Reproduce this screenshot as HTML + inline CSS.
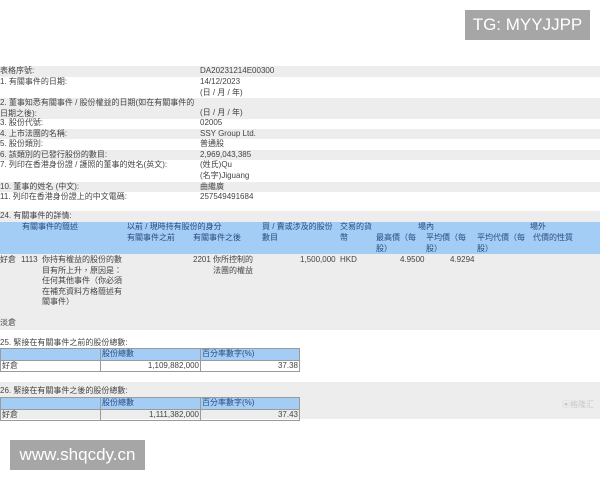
<!DOCTYPE html>
<html><head><meta charset="utf-8"><style>
*{margin:0;padding:0;box-sizing:border-box}
body{width:600px;height:480px;background:#fff;position:relative;overflow:hidden;font-family:"Liberation Sans","Noto Sans CJK TC",sans-serif;font-size:8px;color:#444}
.a{position:absolute;white-space:nowrap;line-height:10.5px}
.bg{position:absolute;left:0;width:600px}
.g{background:#ededed}
.blue{background:#a3cdf5}
.tb{position:absolute;border-collapse:collapse;left:0;width:300px}
.tb td{border:1px solid #9a9a9a;height:11.5px;padding:0 1px;line-height:10px;font-size:8px}
.tb tr.h td{background:#a3cdf5;color:#2a4a80}
.r{text-align:right}
.box{position:absolute;background:#a6a6a6;color:#fff;font-family:"Liberation Sans",sans-serif}
</style></head><body>
<div class="box" style="left:465px;top:10px;width:125px;height:30px;font-size:17px;line-height:30px;text-align:center">TG: MYYJJPP</div>

<div class="bg g" style="top:66px;height:11px"></div>
<div class="bg g" style="top:98px;height:21px"></div>
<div class="bg g" style="top:129px;height:10px"></div>
<div class="bg g" style="top:150px;height:10px"></div>
<div class="bg g" style="top:182px;height:10px"></div>

<div class="a" style="left:0;top:66px">表格序號:</div><div class="a" style="left:200px;top:66px">DA20231214E00300</div>
<div class="a" style="left:0;top:77px">1. 有關事件的日期:</div><div class="a" style="left:200px;top:77px">14/12/2023<br>(日 / 月 / 年)</div>
<div class="a" style="left:0;top:98px">2. 董事知悉有關事件 / 股份權益的日期(如在有關事件的<br>日期之後):</div><div class="a" style="left:200px;top:108px">(日 / 月 / 年)</div>
<div class="a" style="left:0;top:118px">3. 股份代號:</div><div class="a" style="left:200px;top:118px">02005</div>
<div class="a" style="left:0;top:129px">4. 上市法團的名稱:</div><div class="a" style="left:200px;top:129px">SSY Group Ltd.</div>
<div class="a" style="left:0;top:139px">5. 股份類別:</div><div class="a" style="left:200px;top:139px">普通股</div>
<div class="a" style="left:0;top:150px">6. 該類別的已發行股份的數目:</div><div class="a" style="left:200px;top:150px">2,969,043,385</div>
<div class="a" style="left:0;top:160px">7. 列印在香港身份證 / 護照的董事的姓名(英文):</div><div class="a" style="left:200px;top:160px">(姓氏)Qu<br>(名字)Jiguang</div>
<div class="a" style="left:0;top:182px">10. 董事的姓名 (中文):</div><div class="a" style="left:200px;top:182px">曲繼廣</div>
<div class="a" style="left:0;top:192px">11. 列印在香港身份證上的中文電碼:</div><div class="a" style="left:200px;top:192px">257549491684</div>

<div class="bg g" style="top:211px;height:11px"></div>
<div class="a" style="left:0;top:211px">24. 有關事件的詳情:</div>
<div class="bg blue" style="top:222px;height:32px"></div>
<div class="bg g" style="top:254px;height:76px"></div>
<div class="a" style="left:22px;top:222px;color:#2a4a80">有關事件的簡述</div>
<div class="a" style="left:127px;top:222px;color:#2a4a80">以前 / 現時持有股份的身分</div>
<div class="a" style="left:127px;top:233px;color:#2a4a80">有關事件之前</div>
<div class="a" style="left:193px;top:233px;color:#2a4a80">有關事件之後</div>
<div class="a" style="left:262px;top:222px;color:#2a4a80">買 / 賣或涉及的股份<br>數目</div>
<div class="a" style="left:340px;top:222px;color:#2a4a80">交易的貨<br>幣</div>
<div class="a" style="left:418px;top:222px;color:#2a4a80">場內</div>
<div class="a" style="left:376px;top:233px;color:#2a4a80">最高價（每<br>股）</div>
<div class="a" style="left:426px;top:233px;color:#2a4a80">平均價（每<br>股）</div>
<div class="a" style="left:477px;top:233px;color:#2a4a80">平均代價（每<br>股）</div>
<div class="a" style="left:530px;top:222px;color:#2a4a80">場外</div>
<div class="a" style="left:533px;top:233px;color:#2a4a80">代價的性質</div>

<div class="a" style="left:0;top:255px">好倉</div>
<div class="a" style="left:21px;top:255px">1113</div>
<div class="a" style="left:42px;top:255px;line-height:10.6px">你持有權益的股份的數<br>目有所上升，原因是：<br>任何其他事件（你必須<br>在補充資料方格簡述有<br>關事件）</div>
<div class="a" style="left:193px;top:255px">2201</div>
<div class="a" style="left:213px;top:255px">你所控制的<br>法團的權益</div>
<div class="a" style="left:300px;top:255px">1,500,000</div>
<div class="a" style="left:340px;top:255px">HKD</div>
<div class="a" style="left:400px;top:255px">4.9500</div>
<div class="a" style="left:450px;top:255px">4.9294</div>
<div class="a" style="left:0;top:318px">淡倉</div>

<div class="a" style="left:0;top:338px">25. 緊接在有關事件之前的股份總數:</div>
<table class="tb" style="top:348px">
<tr class="h"><td style="width:100px"></td><td style="width:100px">股份總數</td><td>百分率數字(%)</td></tr>
<tr><td>好倉</td><td class="r">1,109,882,000</td><td class="r">37.38</td></tr>
</table>

<div class="bg g" style="top:382px;height:37px"></div>
<div class="a" style="left:0;top:386px">26. 緊接在有關事件之後的股份總數:</div>
<table class="tb" style="top:397px">
<tr class="h"><td style="width:100px"></td><td style="width:100px">股份總數</td><td>百分率數字(%)</td></tr>
<tr><td>好倉</td><td class="r">1,111,382,000</td><td class="r">37.43</td></tr>
</table>
<div class="a" style="left:562px;top:400px;color:#c8c8c8;font-size:8px">▣格隆汇</div>

<div class="box" style="left:10px;top:440px;width:135px;height:30px;font-size:17px;line-height:30px;text-align:center">www.shqcdy.cn</div>
</body></html>
